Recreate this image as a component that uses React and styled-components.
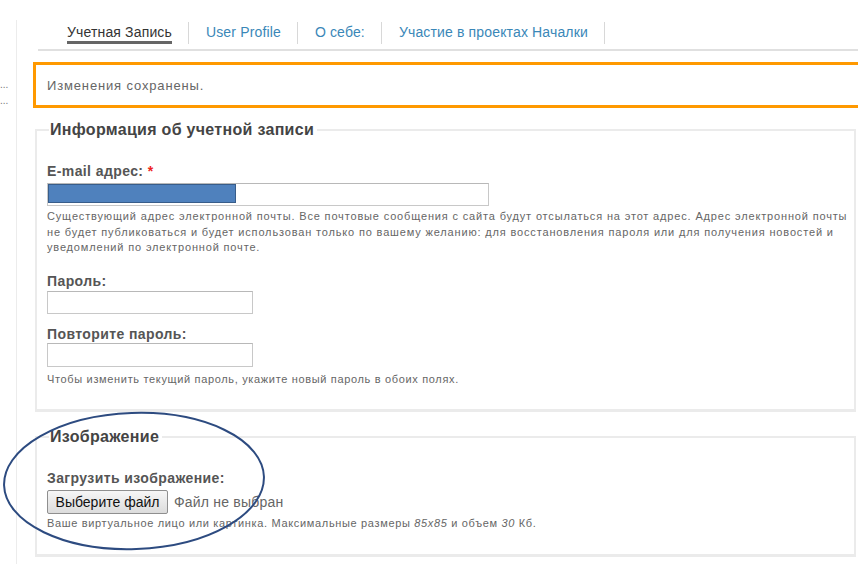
import React from "react";
import styled, { createGlobalStyle } from "styled-components";

const GlobalStyle = createGlobalStyle`
  body {
    margin: 0;
    background: #fff;
    font-family: "Liberation Sans", Arial, sans-serif;
  }
`;

const Page = styled.div`
  position: relative;
  width: 858px;
  height: 564px;
  overflow: hidden;
  display: flex;
  background: #fff;
`;

const Rail = styled.div`
  width: 16px;
  flex-shrink: 0;
  border-right: 1px solid #ececec;
  margin-top: 20px;
  padding-top: 60px;
  display: flex;
  flex-direction: column;
  gap: 7px;
`;

const Dots = styled.span`
  font-size: 10px;
  line-height: 9px;
  color: #777;
`;

const Main = styled.div`
  flex: 1;
  min-width: 0;
  padding-left: 16px;
  display: flex;
  flex-direction: column;
`;

const Tabs = styled.ul`
  list-style: none;
  margin: 22px 0 0 5px;
  padding: 0 0 0 12px;
  display: flex;
  border-bottom: 2px solid #e0e0e0;
  height: 27px;
`;

const Tab = styled.li`
  padding: 2px 16px 0 17px;
  border-right: 1px solid #d8d8d8;
  height: 20px;
  display: flex;
  align-items: flex-start;
`;

const TabLink = styled.span`
  font-size: 14px;
  line-height: 16px;
  letter-spacing: 0.15px;
  white-space: nowrap;
  color: ${(p) => (p.$active ? "#333" : "#3a87b8")};
  border-bottom: ${(p) => (p.$active ? "3px solid #666" : "none")};
  padding-bottom: 1px;
`;

const Notice = styled.div`
  margin: 11px -20px 0 0;
  border: 3px solid #ff9900;
  height: 40px;
  padding-left: 11px;
  display: flex;
  align-items: center;
  font-size: 13px;
  color: #666;
  letter-spacing: 0.85px;
`;

const Fieldset = styled.fieldset`
  margin: ${(p) => p.$top}px 2px 0 2px;
  border: 2px solid #ebebeb;
  border-bottom-width: 3px;
  padding: 0 4px 0 10px;
  height: ${(p) => p.$height}px;
  box-sizing: border-box;
  min-width: 0;
`;

const Legend = styled.legend`
  font-size: 16px;
  font-weight: bold;
  color: #444;
  padding: 0 3px 0 1px;
  margin-left: 2px;
  letter-spacing: 0.3px;
`;

const Label = styled.div`
  font-size: 14px;
  font-weight: bold;
  color: #555;
  letter-spacing: 0.4px;
  margin-top: ${(p) => p.$top}px;
  line-height: 16px;
`;

const Required = styled.span`
  color: #e22;
`;

const TextInput = styled.div`
  position: relative;
  margin-top: ${(p) => p.$gap || 4}px;
  width: ${(p) => p.$width}px;
  height: ${(p) => p.$height || 23}px;
  box-sizing: border-box;
  border: 1px solid #c8c8c8;
  border-top-color: #b8b8b8;
  background: #fff;
`;

const Redacted = styled.div`
  position: absolute;
  left: 0;
  top: 0;
  width: 188px;
  height: 19px;
  background: #4f81bd;
  border: 1px solid #385d8a;
  box-sizing: border-box;
`;

const Help = styled.div`
  font-size: 11px;
  line-height: 15.5px;
  color: #666;
  letter-spacing: ${(p) => p.$spacing || 0.66}px;
  white-space: nowrap;
  margin-top: ${(p) => p.$top || 2}px;
`;

const FileRow = styled.div`
  display: flex;
  align-items: center;
  gap: 6px;
  margin-top: 4px;
`;

const FileButton = styled.div`
  width: 121px;
  height: 24px;
  box-sizing: border-box;
  border: 1px solid #8f8f8f;
  border-radius: 2px;
  background: linear-gradient(#f6f6f6, #dcdcdc);
  font-size: 14px;
  color: #111;
  display: flex;
  align-items: center;
  justify-content: center;
`;

const FileStatus = styled.span`
  font-size: 14px;
  color: #666;
  letter-spacing: 0.2px;
`;

const Annotation = styled.svg`
  position: absolute;
  left: 0;
  top: 0;
  pointer-events: none;
`;

export default function App() {
  return (
    <>
      <GlobalStyle />
      <Page>
        <Rail>
          <Dots>...</Dots>
          <Dots>...</Dots>
        </Rail>
        <Main>
          <Tabs>
            <Tab>
              <TabLink $active>Учетная Запись</TabLink>
            </Tab>
            <Tab>
              <TabLink>User Profile</TabLink>
            </Tab>
            <Tab>
              <TabLink>О себе:</TabLink>
            </Tab>
            <Tab>
              <TabLink>Участие в проектах Началки</TabLink>
            </Tab>
          </Tabs>
          <Notice>Изменения сохранены.</Notice>
          <Fieldset $top={13} $height={291}>
            <Legend>Информация об учетной записи</Legend>
            <Label $top={24}>
              E-mail адрес: <Required>*</Required>
            </Label>
            <TextInput $width={442} $gap={4}>
              <Redacted />
            </TextInput>
            <Help $top={3} $spacing={0.84}>
              Существующий адрес электронной почты. Все почтовые сообщения с сайта будут отсылаться на этот адрес. Адрес электронной почты
              <br />
              не будет публиковаться и будет использован только по вашему желанию: для восстановления пароля или для получения новостей и
              <br />
              уведомлений по электронной почте.
            </Help>
            <Label $top={17}>Пароль:</Label>
            <TextInput $width={206} $gap={2} />
            <Label $top={12}>Повторите пароль:</Label>
            <TextInput $width={206} $gap={1} $height={24} />
            <Help $top={5}>Чтобы изменить текущий пароль, укажите новый пароль в обоих полях.</Help>
          </Fieldset>
          <Fieldset $top={16} $height={129}>
            <Legend>Изображение</Legend>
            <Label $top={24}>Загрузить изображение:</Label>
            <FileRow>
              <FileButton>Выберите файл</FileButton>
              <FileStatus>Файл не выбран</FileStatus>
            </FileRow>
            <Help $top={2}>
              Ваше виртуальное лицо или картинка. Максимальные размеры <i>85x85</i> и объем <i>30</i> Кб.
            </Help>
          </Fieldset>
        </Main>
        <Annotation width="858" height="564" viewBox="0 0 858 564">
          <ellipse
            cx="134"
            cy="481"
            rx="130"
            ry="68"
            fill="none"
            stroke="#2d4b80"
            strokeWidth="2"
            transform="rotate(-2 134 481)"
          />
        </Annotation>
      </Page>
    </>
  );
}
